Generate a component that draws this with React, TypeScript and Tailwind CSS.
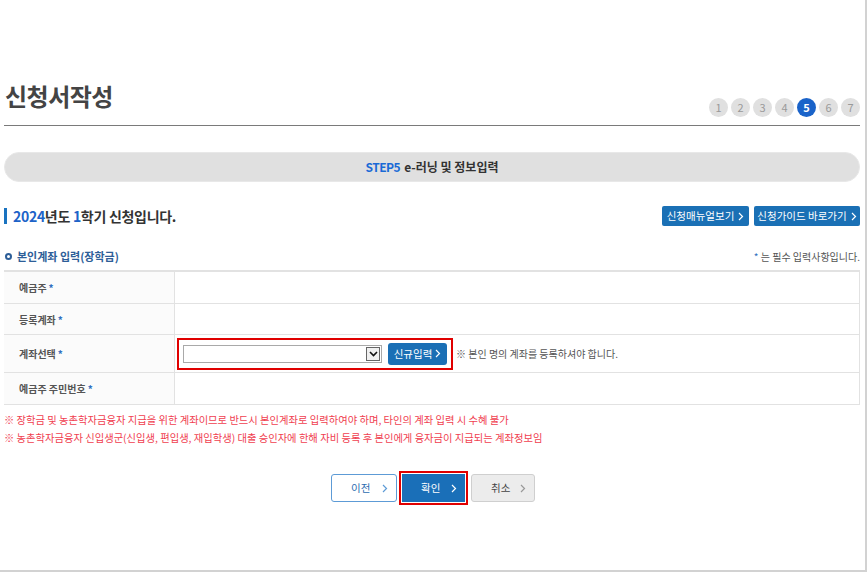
import React from "react";

const Chevron = ({ className = "" }: { className?: string }) => (
  <svg width="6" height="9" viewBox="0 0 6 9" className={className} fill="none">
    <path d="M1 1l3.5 3.5L1 8" stroke="currentColor" strokeWidth="1.2" />
  </svg>
);

const Star = () => <span className="text-[#2f6fc0] ml-[2px]">*</span>;

export default function App() {
  const steps = [1, 2, 3, 4, 5, 6, 7];
  const rows: { label: string; h: string; content?: React.ReactNode }[] = [
    { label: "예금주", h: "h-[32px]" },
    { label: "등록계좌", h: "h-[31px]" },
    {
      label: "계좌선택",
      h: "h-[38px]",
      content: (
        <div className="flex items-center h-full pl-[2px]">
          <div className="flex items-center gap-[5px] border-2 border-[#e00000] h-[32px] w-[276px] pl-[4px]">
            <div className="relative w-[199px] h-[18px] border border-[#a9a9a9] bg-white">
              <div className="absolute right-[1px] top-[1px] w-[14px] h-[14px] border border-[#666] bg-[#f0f0f0] flex items-center justify-center">
                <svg width="9" height="6" viewBox="0 0 9 6" fill="none">
                  <path d="M1 1l3.5 3.5L8 1" stroke="#111" strokeWidth="1.6" />
                </svg>
              </div>
            </div>
            <button className="ml-[1px] h-[22px] w-[59px] rounded-[3px] bg-[#1a6fb5] text-white text-[10.5px] flex items-center justify-center gap-[3px]">
              신규입력 <Chevron className="text-white" />
            </button>
          </div>
          <span className="ml-[3px] text-[10px] text-[#555]">※ 본인 명의 계좌를 등록하셔야 합니다.</span>
        </div>
      ),
    },
    { label: "예금주 주민번호", h: "h-[32px]" },
  ];

  return (
    <div
      className="w-[867px] h-[572px] bg-white border-r-2 border-b-2 border-[#d2d2d2] box-border overflow-hidden"
      style={{ fontFamily: '"Noto Sans CJK KR", "Noto Sans", sans-serif' }}
    >
      <div className="pl-[4px] pr-[5px]">
        {/* header */}
        <div className="h-[126px] border-b border-[#7a7a7a] flex justify-between items-start pt-[80px] box-border">
          <h1 className="text-[24px] leading-[32px] font-bold text-[#444] pl-[1px] tracking-[-0.5px]">신청서작성</h1>
          <div className="flex gap-[3px] mt-[18px]">
            {steps.map((s) => (
              <span
                key={s}
                className={
                  s === 5
                    ? "w-[19px] h-[19px] rounded-full bg-[#1a63c9] text-white text-[11px] font-bold flex items-center justify-center"
                    : "w-[19px] h-[19px] rounded-full bg-[#e0e0e0] text-[#999] text-[11px] flex items-center justify-center"
                }
              >
                {s}
              </span>
            ))}
          </div>
        </div>

        {/* step bar */}
        <div className="mt-[26px] h-[30px] rounded-full bg-[#e0e0e0] border border-[#e8e8e8] flex items-center justify-center text-[12px] font-bold text-[#333]">
          <span className="text-[#1a6ad6] tracking-[-0.5px]">STEP5</span>
          <span className="ml-[4px]">e-러닝 및 정보입력</span>
        </div>

        {/* heading row */}
        <div className="mt-[24px] h-[20px] flex items-center justify-between">
          <div className="flex items-center">
            <span className="w-[3px] h-[16px] bg-[#1a73c0] mr-[6px]" />
            <span className="text-[14px] font-bold text-[#333] tracking-[-0.3px]">
              <span className="text-[#1d63c8]">2024</span>년도 <span className="text-[#1d63c8]">1</span>학기 신청입니다.
            </span>
          </div>
          <div className="flex gap-[5px]">
            <button className="h-[20px] w-[87px] rounded-[2px] bg-[#1a70b5] text-white text-[10.5px] flex items-center justify-center gap-[4px]">
              신청매뉴얼보기 <Chevron />
            </button>
            <button className="h-[20px] w-[106px] rounded-[2px] bg-[#1a70b5] text-white text-[10.5px] flex items-center justify-center gap-[4px]">
              신청가이드 바로가기 <Chevron />
            </button>
          </div>
        </div>

        {/* section title */}
        <div className="mt-[22px] h-[16px] flex items-center justify-between">
          <div className="flex items-center text-[11px] font-bold text-[#2d5e98]">
            <span className="w-[7px] h-[7px] rounded-full border-2 border-[#2d5e98] ml-[1px] mr-[5px] box-border" />
            본인계좌 입력(장학금)
          </div>
          <div className="text-[10px] text-[#555]">
            <span className="text-[#2f6fc0]">*</span> 는 필수 입력사항입니다.
          </div>
        </div>

        {/* table */}
        <div className="mt-[6px] border-t-2 border-[#555] border-r border-[#e2e2e2]">
          {rows.map((r) => (
            <div key={r.label} className={`flex ${r.h} border-b border-[#e2e2e2]`}>
              <div className="w-[171px] shrink-0 bg-[#fbfbfb] border-r border-[#e2e2e2] flex items-center pl-[15px] text-[10px] font-bold text-[#555]">
                {r.label}
                <Star />
              </div>
              <div className="flex-1">{r.content}</div>
            </div>
          ))}
        </div>

        {/* notes */}
        <div className="mt-[6px] text-[10.3px] leading-[18px] text-[#f04050]">
          <p>※ 장학금 및 농촌학자금융자 지급을 위한 계좌이므로 반드시 본인계좌로 입력하여야 하며, 타인의 계좌 입력 시 수혜 불가</p>
          <p>※ 농촌학자금융자 신입생군(신입생, 편입생, 재입학생) 대출 승인자에 한해 자비 등록 후 본인에게 융자금이 지급되는 계좌정보임</p>
        </div>

        {/* action buttons */}
        <div className="mt-[24px] flex items-center justify-center pl-[2px]">
          <button className="h-[28px] w-[66px] rounded-[3px] border border-[#5d9bd6] bg-white text-[#2d6cb0] text-[10.5px] flex items-center justify-between pl-[19px] pr-[8px]">
            이전 <Chevron className="text-[#5d9bd6]" />
          </button>
          <div className="ml-[2px] border-2 border-[#e00000] p-[1px]">
            <button className="h-[28px] w-[63px] bg-[#1a6fb8] text-white text-[10.5px] flex items-center justify-between pl-[19px] pr-[8px]">
              확인 <Chevron />
            </button>
          </div>
          <button className="ml-[3px] h-[28px] w-[64px] rounded-[3px] border border-[#cfcfcf] bg-[#ececec] text-[#444] text-[10.5px] flex items-center justify-between pl-[19px] pr-[8px]">
            취소 <Chevron className="text-[#999]" />
          </button>
        </div>
      </div>
    </div>
  );
}
